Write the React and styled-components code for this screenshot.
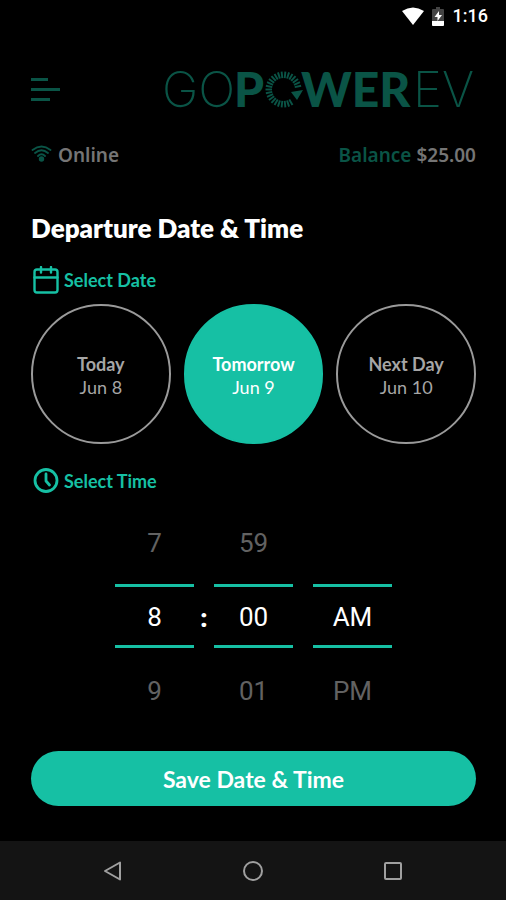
import React, { useState } from "react";
import styled, { createGlobalStyle } from "styled-components";

const teal = "#16c0a4";
const dimTeal = "#0a5446";

const GlobalStyle = createGlobalStyle`
  *, *::before, *::after { box-sizing: border-box; }
  body { margin: 0; background: #000; font-family: Lato, "Open Sans", sans-serif; }
  button { font: inherit; background: none; border: 0; padding: 0; cursor: pointer; }
`;

const Screen = styled.div`
  display: flex;
  flex-direction: column;
  min-height: 100vh;
  background: #000;
  color: #fff;
`;

const StatusBar = styled.div`
  display: flex;
  justify-content: flex-end;
  align-items: center;
  height: 32px;
  padding-right: 18px;
  font: 500 18px/24px Roboto, sans-serif;
`;

const StatusIcon = styled.svg`
  display: block;
  margin-right: ${(p) => p.$gap}px;
`;

const Header = styled.header`
  display: flex;
  justify-content: space-between;
  align-items: center;
  height: 64px;
  margin: 26px 30px 0 31px;
`;

const MenuButton = styled.button`
  display: block;
  height: 28px;
  svg { display: block; }
`;

const Logo = styled.svg`
  display: block;
  overflow: visible;
  fill: ${dimTeal};
`;

const ThinText = styled.text`
  font-family: Inter, sans-serif;
  font-size: 49px;
  font-weight: 200;
`;

const HeavyText = styled.text`
  font-family: Lato, sans-serif;
  font-size: 48px;
  font-weight: 900;
`;

const AccountRow = styled.div`
  display: flex;
  justify-content: space-between;
  align-items: center;
  height: 28px;
  margin: 19px 30px 0 31px;
  font: 600 19px/28px "Noto Sans", sans-serif;
  color: #757575;
`;

const Connection = styled.span`
  display: flex;
  align-items: center;
  gap: 6px;
`;

const Balance = styled.span`
  span { color: ${dimTeal}; }
`;

const Main = styled.main`
  display: flex;
  flex-direction: column;
  flex: 1;
  padding: 43px 30px 35px 31px;
`;

const Title = styled.h1`
  margin: 0;
  font-size: 26px;
  line-height: 32px;
  font-weight: 800;
`;

const SectionLabel = styled.h2`
  display: flex;
  align-items: center;
  gap: 4px;
  margin: ${(p) => p.$top}px 0 0;
  padding-left: 2px;
  font-size: 18px;
  line-height: 28px;
  font-weight: 700;
  color: ${teal};
`;

const Dates = styled.div`
  display: grid;
  grid-template-columns: repeat(3, 1fr);
  gap: 13px;
  margin-top: 10px;
`;

const DateButton = styled.button`
  display: flex;
  flex-direction: column;
  align-items: center;
  justify-content: center;
  aspect-ratio: 1;
  && {
    padding-top: 4px;
    border: 2px solid ${(p) => (p.$active ? teal : "#9a9a9a")};
    border-radius: 50%;
    background: ${(p) => (p.$active ? teal : "transparent")};
    color: ${(p) => (p.$active ? "#fff" : "#a6a6a6")};
    font-size: 18px;
    line-height: 23px;
  }
`;

const Picker = styled.div`
  display: flex;
  justify-content: center;
  margin-top: 5px;
`;

const Wheel = styled.div`
  display: grid;
  grid-template-rows: 84px 64px 84px;
  width: 79px;
  font: 400 26px/30px Roboto, sans-serif;
  text-align: center;
`;

const Step = styled.button`
  && { padding-top: 3px; }
  color: #626262;
`;

const Chosen = styled.output`
  display: flex;
  align-items: center;
  justify-content: center;
  padding-top: 3px;
  border: solid ${teal};
  border-width: 3px 0;
`;

const Separator = styled.span`
  display: flex;
  align-items: center;
  justify-content: center;
  width: 20px;
  padding-top: 4px;
  font: 900 26px/30px Roboto, sans-serif;
`;

const SaveButton = styled.button`
  margin-top: auto;
  height: 55px;
  && {
    padding-top: 1px;
    border-radius: 28px;
    background: ${teal};
    color: #fff;
    font-size: 23px;
    line-height: 28px;
    font-weight: 700;
  }
`;

const NavBar = styled.nav`
  display: flex;
  justify-content: center;
  align-items: center;
  gap: 116px;
  height: 59px;
  background: #141414;
  button { display: block; width: 24px; height: 24px; }
  svg { display: block; fill: none; stroke: #a0a0a0; stroke-width: 2; stroke-linejoin: round; }
`;

const ticks = Array.from({ length: 25 }, (_, i) => 150 + i * 12);

function Brand() {
  return (
    <Logo width="312" height="64" viewBox="0 0 312 64" role="img" aria-label="GOPOWEREV">
      <ThinText x="-2" y="49">GO</ThinText>
      <HeavyText x="70" y="49">P</HeavyText>
      <g stroke={dimTeal} strokeWidth="1.9">
        {ticks.map((a) => (
          <line key={a} x1="119.5" y1="20" x2="119.5" y2="13.5" transform={`rotate(${a} 119.5 31.5)`} />
        ))}
      </g>
      <path d="M127 34l12-2-6 10z" />
      <HeavyText x="137" y="49">WER</HeavyText>
      <ThinText x="249" y="49">EV</ThinText>
    </Logo>
  );
}

const days = [
  ["Today", "Jun 8"],
  ["Tomorrow", "Jun 9"],
  ["Next Day", "Jun 10"],
];

function TimeWheel({ label, before, value, after }) {
  return (
    <Wheel role="group" aria-label={label}>
      {before ? <Step type="button">{before}</Step> : <span />}
      <Chosen>{value}</Chosen>
      <Step type="button">{after}</Step>
    </Wheel>
  );
}

export default function App() {
  const [day, setDay] = useState(1);
  return (
    <Screen>
      <GlobalStyle />
      <StatusBar>
        <StatusIcon $gap={8} width="22" height="18" viewBox="0 0 22 18" fill="#fff">
          <path d="M0 4Q11-3 22 4L11 18z" />
        </StatusIcon>
        <StatusIcon $gap={9} width="12" height="19" viewBox="0 0 12 19">
          <path d="M4 0h4v2h3q1 0 1 1v15q0 1-1 1H1q-1 0-1-1V3q0-1 1-1h3z" fill="#444" />
          <path d="M0 14h12v4q0 1-1 1H1q-1 0-1-1zM7 4L2.500 10h3v4L10 8H7z" fill="#fff" />
        </StatusIcon>
        <span>1:16</span>
      </StatusBar>
      <Header>
        <MenuButton type="button" aria-label="Menu">
          <svg width="30" height="28" viewBox="0 0 30 28" stroke={dimTeal} strokeWidth="3">
            <path d="M0 3.500h17M0 13.500h29M0 23.500h19" />
          </svg>
        </MenuButton>
        <Brand />
      </Header>
      <AccountRow>
        <Connection>
          <svg width="21" height="20" viewBox="0 0 21 20" fill="none" stroke={dimTeal} strokeWidth="1.8" strokeLinecap="round">
            <path d="M1.500 5Q10.500-2 19.500 5M4 8Q10.500 2.500 17 8M7 11Q10.500 7.500 14 11" />
            <circle cx="10.500" cy="14" r="1.800" fill={dimTeal} />
          </svg>
          Online
        </Connection>
        <Balance><span>Balance</span> $25.00</Balance>
      </AccountRow>
      <Main>
        <Title>Departure Date &amp; Time</Title>
        <SectionLabel $top={22}>
          <svg width="27" height="28" viewBox="0 0 27 28" fill="none" stroke={teal} strokeWidth="2.400" strokeLinecap="round">
            <rect x="1.500" y="3.500" width="23" height="23" rx="2.500" />
            <path d="M1.500 11.500h23M8 1v5.500M18 1v5.500" />
          </svg>
          Select Date
        </SectionLabel>
        <Dates>
          {days.map(([name, date], i) => (
            <DateButton key={name} type="button" $active={day === i} aria-pressed={day === i} onClick={() => setDay(i)}>
              <strong>{name}</strong>
              <span>{date}</span>
            </DateButton>
          ))}
        </Dates>
        <SectionLabel $top={23}>
          <svg width="27" height="28" viewBox="0 0 27 28" fill="none" stroke={teal} strokeWidth="2.800" strokeLinecap="round" strokeLinejoin="round">
            <circle cx="13" cy="13.500" r="11" />
            <path d="M13 7v7l3.500 4" />
          </svg>
          Select Time
        </SectionLabel>
        <Picker>
          <TimeWheel label="Hour" before="7" value="8" after="9" />
          <Separator>:</Separator>
          <TimeWheel label="Minute" before="59" value="00" after="01" />
          <Separator />
          <TimeWheel label="AM or PM" value="AM" after="PM" />
        </Picker>
        <SaveButton type="button">Save Date &amp; Time</SaveButton>
      </Main>
      <NavBar>
        <button type="button" aria-label="Back">
          <svg width="24" height="24" viewBox="0 0 24 24"><path d="M19 3.500v17L4 12z" /></svg>
        </button>
        <button type="button" aria-label="Home">
          <svg width="24" height="24" viewBox="0 0 24 24"><circle cx="12" cy="12" r="9" /></svg>
        </button>
        <button type="button" aria-label="Recent apps">
          <svg width="24" height="24" viewBox="0 0 24 24"><rect x="4" y="4" width="16" height="16" rx="1" /></svg>
        </button>
      </NavBar>
    </Screen>
  );
}
